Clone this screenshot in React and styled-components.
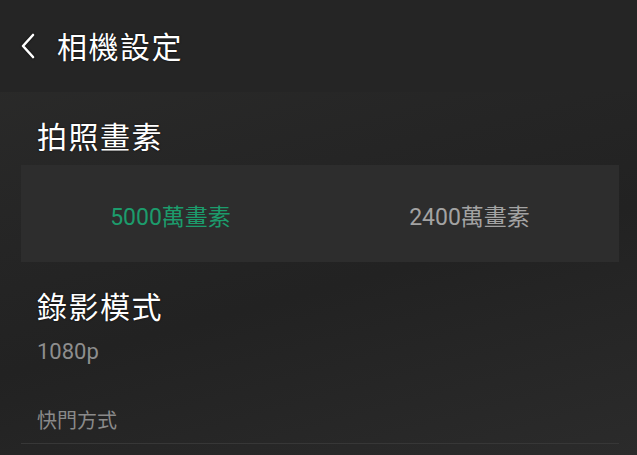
import React from 'react'
import styled, { createGlobalStyle } from 'styled-components'

const GlobalStyle = createGlobalStyle`
    html, body {
        margin: 0;
        padding: 0;
        background: #232323;
    }
    body {
        font-family: Roboto, "Noto Sans CJK TC", sans-serif;
    }
`;

const Screen = styled.div`
    width: 637px;
    height: 455px;
    overflow: hidden;
    display: flex;
    flex-direction: column;
    background: linear-gradient(165deg, #2c2c2b 0%, #252525 40%, #222222 60%, #2b2b2b 100%);
`;

const Header = styled.header`
    height: 92px;
    flex-shrink: 0;
    display: flex;
    align-items: center;
    gap: 19px;
    padding-left: 18px;
    background: #252525;
`;

const BackButton = styled.button`
    border: 0;
    background: none;
    padding: 0;
    width: 20px;
    height: 28px;
    display: flex;
    align-items: center;
    justify-content: center;
    color: #fff;
    svg {
        filter: drop-shadow(0 0 1px rgba(0,0,0,0.8));
    }
`;

const Title = styled.h1`
    margin: 0;
    font-family: "Noto Sans CJK TC", sans-serif;
    font-size: 30px;
    font-weight: 400;
    color: #fff;
    letter-spacing: 1.5px;
    text-shadow: 0 0 2px rgba(0,0,0,0.9);
    line-height: 1;
    margin-top: -2px;
`;

const Body = styled.main`
    flex: 1;
    display: flex;
    flex-direction: column;
`;

const SectionTitle = styled.h2`
    margin: 0;
    padding: ${p => p.$top}px 37px 0;
    font-family: "Noto Sans CJK TC", sans-serif;
    font-size: 30px;
    font-weight: 400;
    line-height: 36px;
    color: #fff;
    letter-spacing: 1.5px;
    text-shadow: 0 0 2px rgba(0,0,0,0.9);
`;

const OptionPanel = styled.div`
    margin: 12px 18px 0 21px;
    height: 97px;
    display: grid;
    grid-template-columns: 1fr 1fr;
    align-items: center;
    background: #2d2d2d;
`;

const Option = styled.div`
    text-align: center;
    font-size: 23px;
    color: ${p => (p.$active ? '#1c9c6c' : '#a3a3a3')};
    padding-top: 2px;
`;

const Value = styled.div`
    padding: 16px 37px 0;
    font-size: 22px;
    line-height: 26px;
    color: #8e8e8e;
`;

const SubLabel = styled.div`
    padding: 41px 37px 0;
    font-family: "Noto Sans CJK TC", sans-serif;
    font-size: 20px;
    line-height: 28px;
    color: #8a8a8a;
`;

const Divider = styled.hr`
    margin: 9px 18px 0 21px;
    border: 0;
    height: 1px;
    background: #373737;
`;

export default function App() {
    return (
        <>
            <GlobalStyle />
            <Screen>
                <Header>
                    <BackButton aria-label="back">
                        <svg width="16" height="26" viewBox="0 0 16 26" fill="none">
                            <path d="M13 2 L3 13 L13 24" stroke="#fff" strokeWidth="2.6" strokeLinecap="round" strokeLinejoin="round" />
                        </svg>
                    </BackButton>
                    <Title>相機設定</Title>
                </Header>
                <Body>
                    <SectionTitle $top={25}>拍照畫素</SectionTitle>
                    <OptionPanel>
                        <Option $active>5000萬畫素</Option>
                        <Option>2400萬畫素</Option>
                    </OptionPanel>
                    <SectionTitle $top={25}>錄影模式</SectionTitle>
                    <Value>1080p</Value>
                    <SubLabel>快門方式</SubLabel>
                    <Divider />
                </Body>
            </Screen>
        </>
    )
}
